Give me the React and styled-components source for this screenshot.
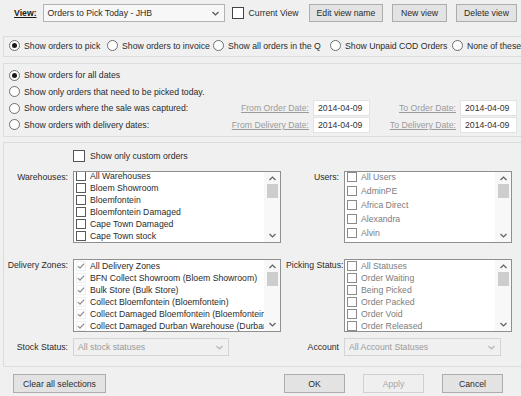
import React from 'react';
import styled, { createGlobalStyle } from 'styled-components';

const GlobalStyle = createGlobalStyle`
  body {
    margin: 0;
    background: #f0f0f0;
    font-family: "Liberation Sans", Arial, sans-serif;
    font-size: 8.7px;
    color: #2b2b2b;
  }
`;

const Window = styled.div`
  width: 521px;
  height: 396px;
  overflow: hidden;
  display: flex;
  flex-direction: column;
  background: #f0f0f0;
`;

const TopBar = styled.div`
  display: flex;
  align-items: center;
  height: 26px;
  padding: 0 4px 0 14px;
`;

const ViewLabel = styled.span`
  font-weight: bold;
  text-decoration: underline;
  margin-right: 6px;
  color: #1a1a1a;
`;

const Select = styled.div`
  box-sizing: border-box;
  width: ${p => p.$w}px;
  height: 18px;
  display: flex;
  align-items: center;
  justify-content: space-between;
  padding: 0 5px 0 4px;
  border: 1px solid ${p => (p.$disabled ? '#d4d4d4' : '#b3b3b3')};
  background: ${p => (p.$disabled ? '#f0f0f0' : '#f7f7f7')};
  color: ${p => (p.$disabled ? '#9a9a9a' : '#2b2b2b')};
  justify-self: start;
`;

const Box = styled.span`
  box-sizing: border-box;
  flex: none;
  width: ${p => p.$size || 10}px;
  height: ${p => p.$size || 10}px;
  border: 1px solid ${p => p.$border || '#5a5a5a'};
  background: #fff;
  display: flex;
  align-items: center;
  justify-content: center;
`;

const CheckLabel = styled.label`
  display: flex;
  align-items: center;
  gap: 5px;
  margin-left: ${p => p.$ml || 0}px;
  white-space: nowrap;
`;

const ButtonGroup = styled.div`
  margin-left: auto;
  display: flex;
  gap: 9px;
`;

const Button = styled.button`
  box-sizing: border-box;
  width: ${p => p.$w}px;
  height: ${p => p.$h || 18}px;
  padding: 0;
  font: inherit;
  color: ${p => (p.disabled ? '#a8a8a8' : '#2b2b2b')};
  background: ${p => (p.disabled ? '#efefef' : '#e3e3e3')};
  border: 1px solid ${p => (p.disabled ? '#d0d0d0' : '#adadad')};
  border-radius: 0;
`;

// panels run past the right edge of the captured window
const Panel = styled.div`
  box-sizing: border-box;
  flex: none;
  width: 524px;
  margin: ${p => p.$mt}px 0 0 3px;
  height: ${p => p.$h}px;
  border: 1px solid #dcdcdc;
`;

const ModeRow = styled(Panel)`
  display: grid;
  grid-template-columns: 98px 106px 117px 122px 1fr;
  align-items: center;
  padding: 0 0 2px 5px;
  white-space: nowrap;
  overflow: hidden;
`;

const RadioItem = styled.label`
  display: flex;
  align-items: center;
  gap: 4px;
  white-space: nowrap;
`;

const RadioCircle = styled.span`
  box-sizing: border-box;
  flex: none;
  width: 11px;
  height: 11px;
  border-radius: 50%;
  border: 1px solid #6e6e6e;
  background: #fff;
  display: flex;
  align-items: center;
  justify-content: center;
  &::after {
    content: '';
    width: 5px;
    height: 5px;
    border-radius: 50%;
    background: ${p => (p.$on ? '#1a1a1a' : 'transparent')};
  }
`;

const DatePanel = styled(Panel)`
  padding: 3px 0 0 5px;
  display: grid;
  grid-template-columns: 221px 83px 57px 90px 57px;
  grid-auto-rows: 16.5px;
  align-items: center;
`;

const DateLabel = styled.span`
  text-align: right;
  padding-right: 4px;
  color: #9b9b9b;
  text-decoration: underline;
  white-space: nowrap;
`;

const DateInput = styled.div`
  box-sizing: border-box;
  height: 16px;
  border: 1px solid #e2e2e2;
  background: #fff;
  padding-left: 4px;
  display: flex;
  align-items: center;
  color: #333;
`;

const FilterPanel = styled(Panel)`
  display: flex;
  flex-direction: column;
  padding-top: 7px;
`;

const FilterRow = styled.div`
  display: grid;
  grid-template-columns: 64px 208px 53px 168px;
  column-gap: 5px;
  margin-top: ${p => p.$mt || 0}px;
  height: ${p => p.$h}px;
  align-items: ${p => p.$align || 'start'};
`;

const FieldLabel = styled.span`
  text-align: right;
  white-space: nowrap;
  line-height: 12px;
`;

const ListBox = styled.div`
  box-sizing: border-box;
  position: relative;
  height: 100%;
  border: 1px solid #8f8f8f;
  background: #fff;
  overflow: hidden;
`;

const ListItems = styled.div`
  margin-top: ${p => p.$shift || 0}px;
  margin-right: 16px;
  overflow: hidden;
`;

const ListItem = styled.div`
  display: flex;
  align-items: center;
  gap: 4px;
  height: ${p => p.$rowH}px;
  padding-left: 2px;
  white-space: nowrap;
  color: ${p => (p.$muted ? '#7c7c7c' : '#2b2b2b')};
`;

const ScrollBar = styled.div`
  position: absolute;
  top: 0;
  right: 0;
  bottom: 0;
  width: 16px;
  background: #f8f8f8;
  display: flex;
  flex-direction: column;
  align-items: center;
  justify-content: space-between;
  padding: 4px 0 4px;
  box-sizing: border-box;
`;

const Thumb = styled.div`
  position: absolute;
  top: 12px;
  right: 2px;
  width: 11px;
  height: 14px;
  background: #cdcdcd;
`;

const Footer = styled.div`
  display: flex;
  align-items: center;
  margin-top: 7px;
  padding: 0 18px 0 13px;
`;

const FooterRight = styled.div`
  margin-left: auto;
  display: flex;
  gap: 18px;
`;

const Chevron = ({ up, color = '#606060' }) => (
  <svg width="7" height="5" viewBox="0 0 7 5">
    <path
      d={up ? 'M0.5 4 L3.5 1 L6.5 4' : 'M0.5 1 L3.5 4 L6.5 1'}
      fill="none"
      stroke={color}
      strokeWidth="1.2"
    />
  </svg>
);

const Tick = () => (
  <svg width="9" height="8" viewBox="0 0 9 8">
    <path d="M1 4.2 L3.4 6.5 L8 1.2" fill="none" stroke="#8a8a8a" strokeWidth="1.3" />
  </svg>
);

function Radio({ on, children }) {
  return (
    <RadioItem>
      <RadioCircle $on={on} />
      <span>{children}</span>
    </RadioItem>
  );
}

function List({ items, rowH, shift, muted, ticked }) {
  return (
    <ListBox>
      <ListItems $shift={shift}>
        {items.map(t => (
          <ListItem key={t} $rowH={rowH} $muted={muted}>
            {ticked ? (
              <Box $border="#f0f0f0">
                <Tick />
              </Box>
            ) : (
              <Box $border={muted ? '#8a8a8a' : '#5a5a5a'} />
            )}
            <span>{t}</span>
          </ListItem>
        ))}
      </ListItems>
      <ScrollBar>
        <Chevron up />
        <Chevron />
      </ScrollBar>
      <Thumb />
    </ListBox>
  );
}

const warehouses = [
  'All Warehouses',
  'Bloem Showroom',
  'Bloemfontein',
  'Bloemfontein Damaged',
  'Cape Town Damaged',
  'Cape Town stock',
];
const users = ['All Users', 'AdminPE', 'Africa Direct', 'Alexandra', 'Alvin'];
const zones = [
  'All Delivery Zones',
  'BFN Collect Showroom (Bloem Showroom)',
  'Bulk Store (Bulk Store)',
  'Collect Bloemfontein (Bloemfontein)',
  'Collect Damaged Bloemfontein (Bloemfontein Damaged)',
  'Collect Damaged Durban Warehouse (Durban Warehouse)',
];
const statuses = [
  'All Statuses',
  'Order Waiting',
  'Being Picked',
  'Order Packed',
  'Order Void',
  'Order Released',
];

export default function App() {
  return (
    <Window>
      <GlobalStyle />
      <TopBar>
        <ViewLabel>View:</ViewLabel>
        <Select $w={182}>
          <span>Orders to Pick Today - JHB</span>
          <Chevron color="#555" />
        </Select>
        <CheckLabel $ml={7}>
          <Box $size={12} $border="#444" />
          <span>Current View</span>
        </CheckLabel>
        <ButtonGroup>
          <Button $w={74}>Edit view name</Button>
          <Button $w={55}>New view</Button>
          <Button $w={61}>Delete view</Button>
        </ButtonGroup>
      </TopBar>

      <ModeRow $mt={10} $h={21}>
        <Radio on>Show orders to pick</Radio>
        <Radio>Show orders to invoice</Radio>
        <Radio>Show all orders in the Q</Radio>
        <Radio>Show Unpaid COD Orders</Radio>
        <Radio>None of these</Radio>
      </ModeRow>

      <DatePanel $mt={6} $h={74}>
        <Radio on>Show orders for all dates</Radio>
        <span />
        <span />
        <span />
        <span />
        <Radio>Show only orders that need to be picked today.</Radio>
        <span />
        <span />
        <span />
        <span />
        <Radio>Show orders where the sale was captured:</Radio>
        <DateLabel>From Order Date:</DateLabel>
        <DateInput>2014-04-09</DateInput>
        <DateLabel>To Order Date:</DateLabel>
        <DateInput>2014-04-09</DateInput>
        <Radio>Show orders with delivery dates:</Radio>
        <DateLabel>From Delivery Date:</DateLabel>
        <DateInput>2014-04-09</DateInput>
        <DateLabel>To Delivery Date:</DateLabel>
        <DateInput>2014-04-09</DateInput>
      </DatePanel>

      <FilterPanel $mt={5} $h={225}>
        <FilterRow $h={12} $align="center">
          <span />
          <CheckLabel>
            <Box $size={12} $border="#555" />
            <span>Show only custom orders</span>
          </CheckLabel>
        </FilterRow>
        <FilterRow $mt={9} $h={72}>
          <FieldLabel>Warehouses:</FieldLabel>
          <List items={warehouses} rowH={12} shift={-2} />
          <FieldLabel>Users:</FieldLabel>
          <List items={users} rowH={14} shift={-2} muted />
        </FilterRow>
        <FilterRow $mt={16} $h={73}>
          <FieldLabel>Delivery Zones:</FieldLabel>
          <List items={zones} rowH={12} ticked />
          <FieldLabel>Picking Status:</FieldLabel>
          <List items={statuses} rowH={12} muted />
        </FilterRow>
        <FilterRow $mt={6} $h={18} $align="center">
          <FieldLabel>Stock Status:</FieldLabel>
          <Select $w={156} $disabled>
            <span>All stock statuses</span>
            <Chevron color="#b5b5b5" />
          </Select>
          <FieldLabel>Account</FieldLabel>
          <Select $w={157} $disabled>
            <span>All Account Statuses</span>
            <Chevron color="#b5b5b5" />
          </Select>
        </FilterRow>
      </FilterPanel>

      <Footer>
        <Button $w={93} $h={19}>Clear all selections</Button>
        <FooterRight>
          <Button $w={61} $h={19}>OK</Button>
          <Button $w={61} $h={19} disabled>Apply</Button>
          <Button $w={61} $h={19}>Cancel</Button>
        </FooterRight>
      </Footer>
    </Window>
  );
}
